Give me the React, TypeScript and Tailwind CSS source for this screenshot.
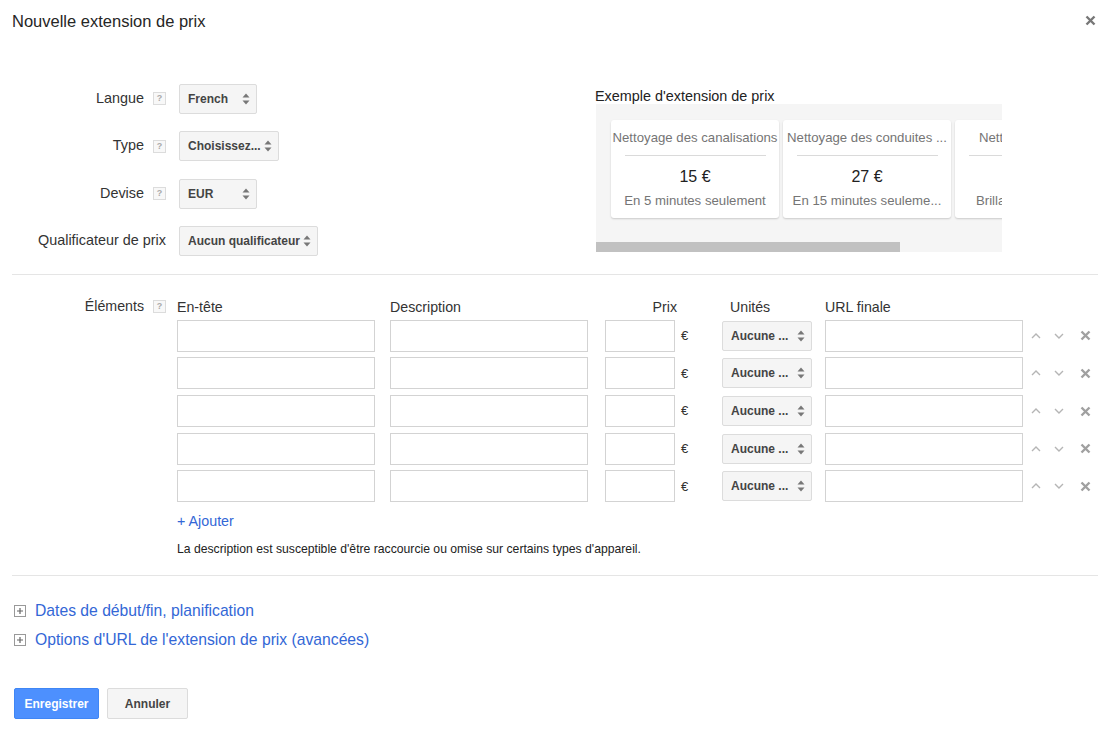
import React from "react";

const Help = () => (
    <span className="inline-flex items-center justify-center w-[13px] h-[13px] border border-[#dcdcdc] bg-[#f8f8f8] text-[9px] leading-none text-[#aaa] font-bold">?</span>
);

const Arrows = () => (
    <svg width="8" height="12" viewBox="0 0 8 12" className="shrink-0">
        <path d="M4 0.5 L7.5 4.5 L0.5 4.5 Z" fill="#777" />
        <path d="M4 11.5 L7.5 7.5 L0.5 7.5 Z" fill="#777" />
    </svg>
);

const Select = ({ value, w }: { value: string; w: string }) => (
    <div className={`flex items-center justify-between h-[30px] pl-[8px] pr-[6px] border border-[#dcdcdc] bg-[#f5f5f5] rounded-[2px] text-[12px] font-bold text-[#444] ${w}`}>
        <span className="whitespace-nowrap">{value}</span>
        <Arrows />
    </div>
);

const FormRow = ({ label, help, children }: { label: string; help?: boolean; children: React.ReactNode }) => (
    <div className="flex items-center h-[30px]">
        <div className="w-[154px] flex items-center justify-end text-[14.4px] text-[#333] whitespace-nowrap">
            <span>{label}</span>
            {help && <span className="ml-[9px] flex"><Help /></span>}
        </div>
        <div className="ml-[13px]">{children}</div>
    </div>
);

const Card = ({ title, price, sub }: { title: string; price: string; sub: string }) => (
    <div className="w-[168px] h-[98px] shrink-0 bg-white rounded-[3px] shadow-[0_1px_2px_rgba(0,0,0,0.18)] flex flex-col items-center">
        <div className="w-full text-center text-[13.2px] leading-[15px] text-[#757575] whitespace-nowrap overflow-hidden mt-[10px]">{title}</div>
        <div className="w-[141px] h-px bg-[#dadada] mt-[10px]" />
        <div className="text-[16px] leading-[18px] text-[#212121] mt-[12px]">{price}</div>
        <div className="w-full text-center text-[13.2px] leading-[15px] text-[#757575] whitespace-nowrap overflow-hidden mt-[7px]">{sub}</div>
    </div>
);

const inputCls = "h-[32px] border border-[#d3d3d3] bg-white";

const ItemRow = () => (
    <div className="flex items-center h-[32px]">
        <div className={`${inputCls} w-[198px]`} />
        <div className={`${inputCls} w-[198px] ml-[15px]`} />
        <div className={`${inputCls} w-[70px] ml-[17px]`} />
        <span className="w-[47px] pl-[6px] text-[13px] text-[#333]">€</span>
        <Select value="Aucune ..." w="w-[90px]" />
        <div className={`${inputCls} w-[198px] ml-[13px]`} />
        <div className="flex items-center ml-[8px] gap-[13px]">
            <svg width="10" height="6" viewBox="0 0 10 6"><path d="M1 5 L5 1 L9 5" fill="none" stroke="#b5b5b5" strokeWidth="1.4" /></svg>
            <svg width="10" height="6" viewBox="0 0 10 6"><path d="M1 1 L5 5 L9 1" fill="none" stroke="#b5b5b5" strokeWidth="1.4" /></svg>
            <svg width="11" height="11" viewBox="0 0 11 11" className="ml-[3px]"><path d="M1.5 1.5 L9.5 9.5 M9.5 1.5 L1.5 9.5" stroke="#a0a0a0" strokeWidth="2.4" /></svg>
        </div>
    </div>
);

const PlusBox = () => (
    <svg width="12" height="12" viewBox="0 0 12 12" className="shrink-0">
        <rect x="0.5" y="0.5" width="11" height="11" fill="#fff" stroke="#999" />
        <path d="M3 6 H9 M6 3 V9" stroke="#666" strokeWidth="1.2" />
    </svg>
);

const App = () => {
    return (
        <div className="w-[1116px] h-[731px] bg-white font-['Liberation_Sans',Arial,sans-serif] text-[#222] overflow-hidden">
            {/* header */}
            <div className="flex items-start justify-between pl-3 pr-[18px] pt-[12px]">
                <h1 className="text-[16.5px] leading-[19px] text-[#262626]">Nouvelle extension de prix</h1>
                <svg width="11" height="11" viewBox="0 0 11 11" className="mt-[3px] mr-[2px]">
                    <path d="M1.5 1.5 L9.5 9.5 M9.5 1.5 L1.5 9.5" stroke="#777" strokeWidth="2.4" />
                </svg>
            </div>

            {/* top form + preview */}
            <div className="flex pl-3 mt-[53px]">
                <div className="w-[583px] flex flex-col gap-[17.3px]">
                    <FormRow label="Langue" help><Select value="French" w="w-[78px]" /></FormRow>
                    <FormRow label="Type" help><Select value="Choisissez..." w="w-[100px]" /></FormRow>
                    <FormRow label="Devise" help><Select value="EUR" w="w-[78px]" /></FormRow>
                    <FormRow label="Qualificateur de prix"><Select value="Aucun qualificateur" w="w-[139px]" /></FormRow>
                </div>
                <div className="w-[407px] pt-[4px]">
                    <div className="text-[14.4px] leading-[16px] text-[#222]">Exemple d'extension de prix</div>
                    <div className="ml-px w-[406px] h-[148px] bg-[#f5f5f5] overflow-hidden">
                        <div className="flex gap-[4px] pl-[15px] pt-[16px]">
                            <Card title="Nettoyage des canalisations" price="15 €" sub="En 5 minutes seulement" />
                            <Card title="Nettoyage des conduites ..." price="27 €" sub="En 15 minutes seuleme..." />
                            <Card title="Nettoyage des vitres" price="45 €" sub="Brillant et sans traces" />
                        </div>
                        <div className="w-[304px] h-[10px] bg-[#c1c1c1] mt-[24px]" />
                    </div>
                </div>
            </div>

            <div className="ml-3 mr-[18px] h-px bg-[#e5e5e5] mt-[18px]" />

            {/* elements */}
            <div className="flex pl-3 pt-[24px]">
                <div className="w-[154px] flex items-center justify-end h-[16px] text-[14.2px] text-[#333]">
                    <span>Éléments</span>
                    <span className="ml-[9px] flex"><Help /></span>
                </div>
                <div className="ml-[11px]">
                    <div className="flex h-[16px] text-[14.2px] leading-[16px] text-[#333] whitespace-nowrap">
                        <span className="w-[213px]">En-tête</span>
                        <span className="w-[215px]">Description</span>
                        <span className="w-[72px] text-right">Prix</span>
                        <span className="w-[148px] pl-[53px]">Unités</span>
                        <span>URL finale</span>
                    </div>
                    <div className="flex flex-col gap-[5.6px] mt-[5px]">
                        <ItemRow />
                        <ItemRow />
                        <ItemRow />
                        <ItemRow />
                        <ItemRow />
                    </div>
                    <div className="mt-[11px] text-[14.3px] leading-[16px] text-[#3367d6]">+ Ajouter</div>
                    <div className="mt-[13px] text-[12.2px] leading-[14px] text-[#222] whitespace-nowrap">La description est susceptible d'être raccourcie ou omise sur certains types d'appareil.</div>
                </div>
            </div>

            <div className="ml-3 mr-[18px] h-px bg-[#e5e5e5] mt-[19px]" />

            {/* expanders */}
            <div className="pl-[14px] mt-[26px] flex flex-col gap-[11px] text-[15.7px] leading-[18px] text-[#3367d6]">
                <div className="flex items-center gap-[9px]"><PlusBox /><span>Dates de début/fin, planification</span></div>
                <div className="flex items-center gap-[9px]"><PlusBox /><span>Options d'URL de l'extension de prix (avancées)</span></div>
            </div>

            {/* buttons */}
            <div className="flex pl-[14px] mt-[39px] gap-[8px]">
                <button className="w-[85px] h-[31px] rounded-[2px] bg-[#4d90fe] border border-[#3f86f5] text-white text-[12px] font-bold">Enregistrer</button>
                <button className="w-[81px] h-[31px] rounded-[2px] bg-[#f5f5f5] border border-[#dcdcdc] text-[#444] text-[12px] font-bold">Annuler</button>
            </div>
        </div>
    );
};

export default App;
